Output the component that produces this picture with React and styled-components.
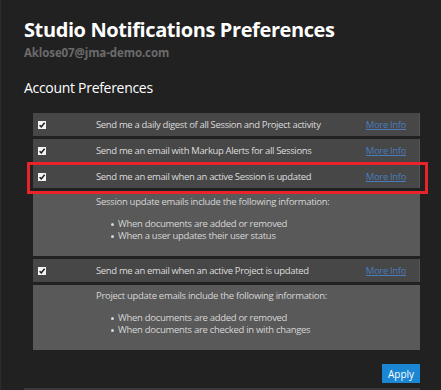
import React from 'react'
import styled, { createGlobalStyle } from 'styled-components'

const GlobalStyle = createGlobalStyle`
  html, body {
    margin: 0;
    padding: 0;
    background: #212121;
  }
  body {
    font-family: "Open Sans", "Liberation Sans", sans-serif;
  }
`

const prefs = [
  { id: 'digest', label: 'Send me a daily digest of all Session and Project activity' },
  { id: 'markup', label: 'Send me an email with Markup Alerts for all Sessions' },
  {
    id: 'session',
    label: 'Send me an email when an active Session is updated',
    highlight: true,
    intro: 'Session update emails include the following information:',
    items: ['When documents are added or removed', 'When a user updates their user status'],
  },
  {
    id: 'project',
    label: 'Send me an email when an active Project is updated',
    intro: 'Project update emails include the following information:',
    items: ['When documents are added or removed', 'When documents are checked in with changes'],
  },
]

const CheckMark = () => (
  <Check>
    <svg width="8" height="8" viewBox="0 0 8 8">
      <path d="M1.6 4.2 L3.3 5.9 L6.6 1.8" fill="none" stroke="#1c1c1c" strokeWidth="1.5" />
    </svg>
  </Check>
)

const App = () => {
  return (
    <Page>
      <GlobalStyle />
      <Title>Studio Notifications Preferences</Title>
      <Email>Aklose07@jma-demo.com</Email>
      <SectionTitle>Account Preferences</SectionTitle>
      <List>
        {prefs.map(p => (
          <React.Fragment key={p.id}>
            <Row>
              {p.highlight && <Highlight />}
              <CheckCell><CheckMark /></CheckCell>
              <Label>{p.label}</Label>
              <MoreInfo href="#">More Info</MoreInfo>
            </Row>
            {p.items && (
              <Details>
                <Intro>{p.intro}</Intro>
                <Bullets>
                  {p.items.map(item => <Bullet key={item}>{item}</Bullet>)}
                </Bullets>
              </Details>
            )}
          </React.Fragment>
        ))}
      </List>
      <Footer>
        <ApplyButton>Apply</ApplyButton>
      </Footer>
      <BottomEdge />
    </Page>
  )
}

const Page = styled.div`
  width: 441px;
  height: 390px;
  box-sizing: border-box;
  padding: 17px 21px 0 23px;
  border-left: 1px solid #2c2c2c;
  overflow: hidden;
  display: flex;
  flex-direction: column;
`

const Title = styled.h1`
  margin: 0;
  font-size: 20px;
  line-height: 26px;
  font-weight: 700;
  color: #ffffff;
  letter-spacing: -0.4px;
`

const Email = styled.div`
  margin-top: 2px;
  font-size: 11.5px;
  line-height: 16px;
  font-weight: 700;
  color: #6b6b6b;
  letter-spacing: -0.1px;
`

const SectionTitle = styled.h2`
  margin: 17px 0 0;
  font-size: 14px;
  line-height: 20px;
  font-weight: 400;
  color: #ffffff;
  letter-spacing: -0.3px;
`

const List = styled.div`
  margin: 15px 0 0 9px;
  display: flex;
  flex-direction: column;
  gap: 3px;
`

const Row = styled.div`
  position: relative;
  height: 23px;
  display: grid;
  grid-template-columns: 63px 1fr auto;
  align-items: center;
  background: #474747;
  border-right: 1px solid #555;
  padding-right: 13px;
  font-size: 9.5px;
  letter-spacing: -0.35px;
`

const Highlight = styled.div`
  position: absolute;
  left: -6px;
  right: -9px;
  top: -3px;
  bottom: -6px;
  border: 3px solid #e8232a;
  pointer-events: none;
  z-index: 2;
`

const CheckCell = styled.div`
  display: flex;
  padding-left: 5px;
`

const Check = styled.span`
  width: 8px;
  height: 8px;
  background: #f4f4f4;
  display: flex;
  align-items: center;
  justify-content: center;
`

const Label = styled.span`
  color: #dcdcdc;
  white-space: nowrap;
`

const MoreInfo = styled.a`
  color: #4a7cbd;
  text-decoration: underline;
`

const Details = styled.div`
  background: #595959;
  padding: 5px 0 14px 63px;
  font-size: 9.5px;
  letter-spacing: -0.3px;
  line-height: 12px;
  color: #d6d6d6;
`

const Intro = styled.div``

const Bullets = styled.ul`
  list-style: none;
  margin: 10px 0 0;
  padding: 0;
`

const Bullet = styled.li`
  position: relative;
  padding-left: 22px;
  &::before {
    content: '';
    position: absolute;
    left: 15px;
    top: 5px;
    width: 3px;
    height: 3px;
    border-radius: 50%;
    background: #d6d6d6;
  }
`

const Footer = styled.div`
  display: flex;
  justify-content: flex-end;
  margin-top: 14px;
`

const ApplyButton = styled.button`
  width: 38px;
  height: 19px;
  border: none;
  background: #1a86d4;
  color: #fff;
  font-family: inherit;
  font-size: 10px;
  padding: 0;
`

const BottomEdge = styled.div`
  margin-top: auto;
  height: 2px;
  background: #3a3a3a;
`

export default App
